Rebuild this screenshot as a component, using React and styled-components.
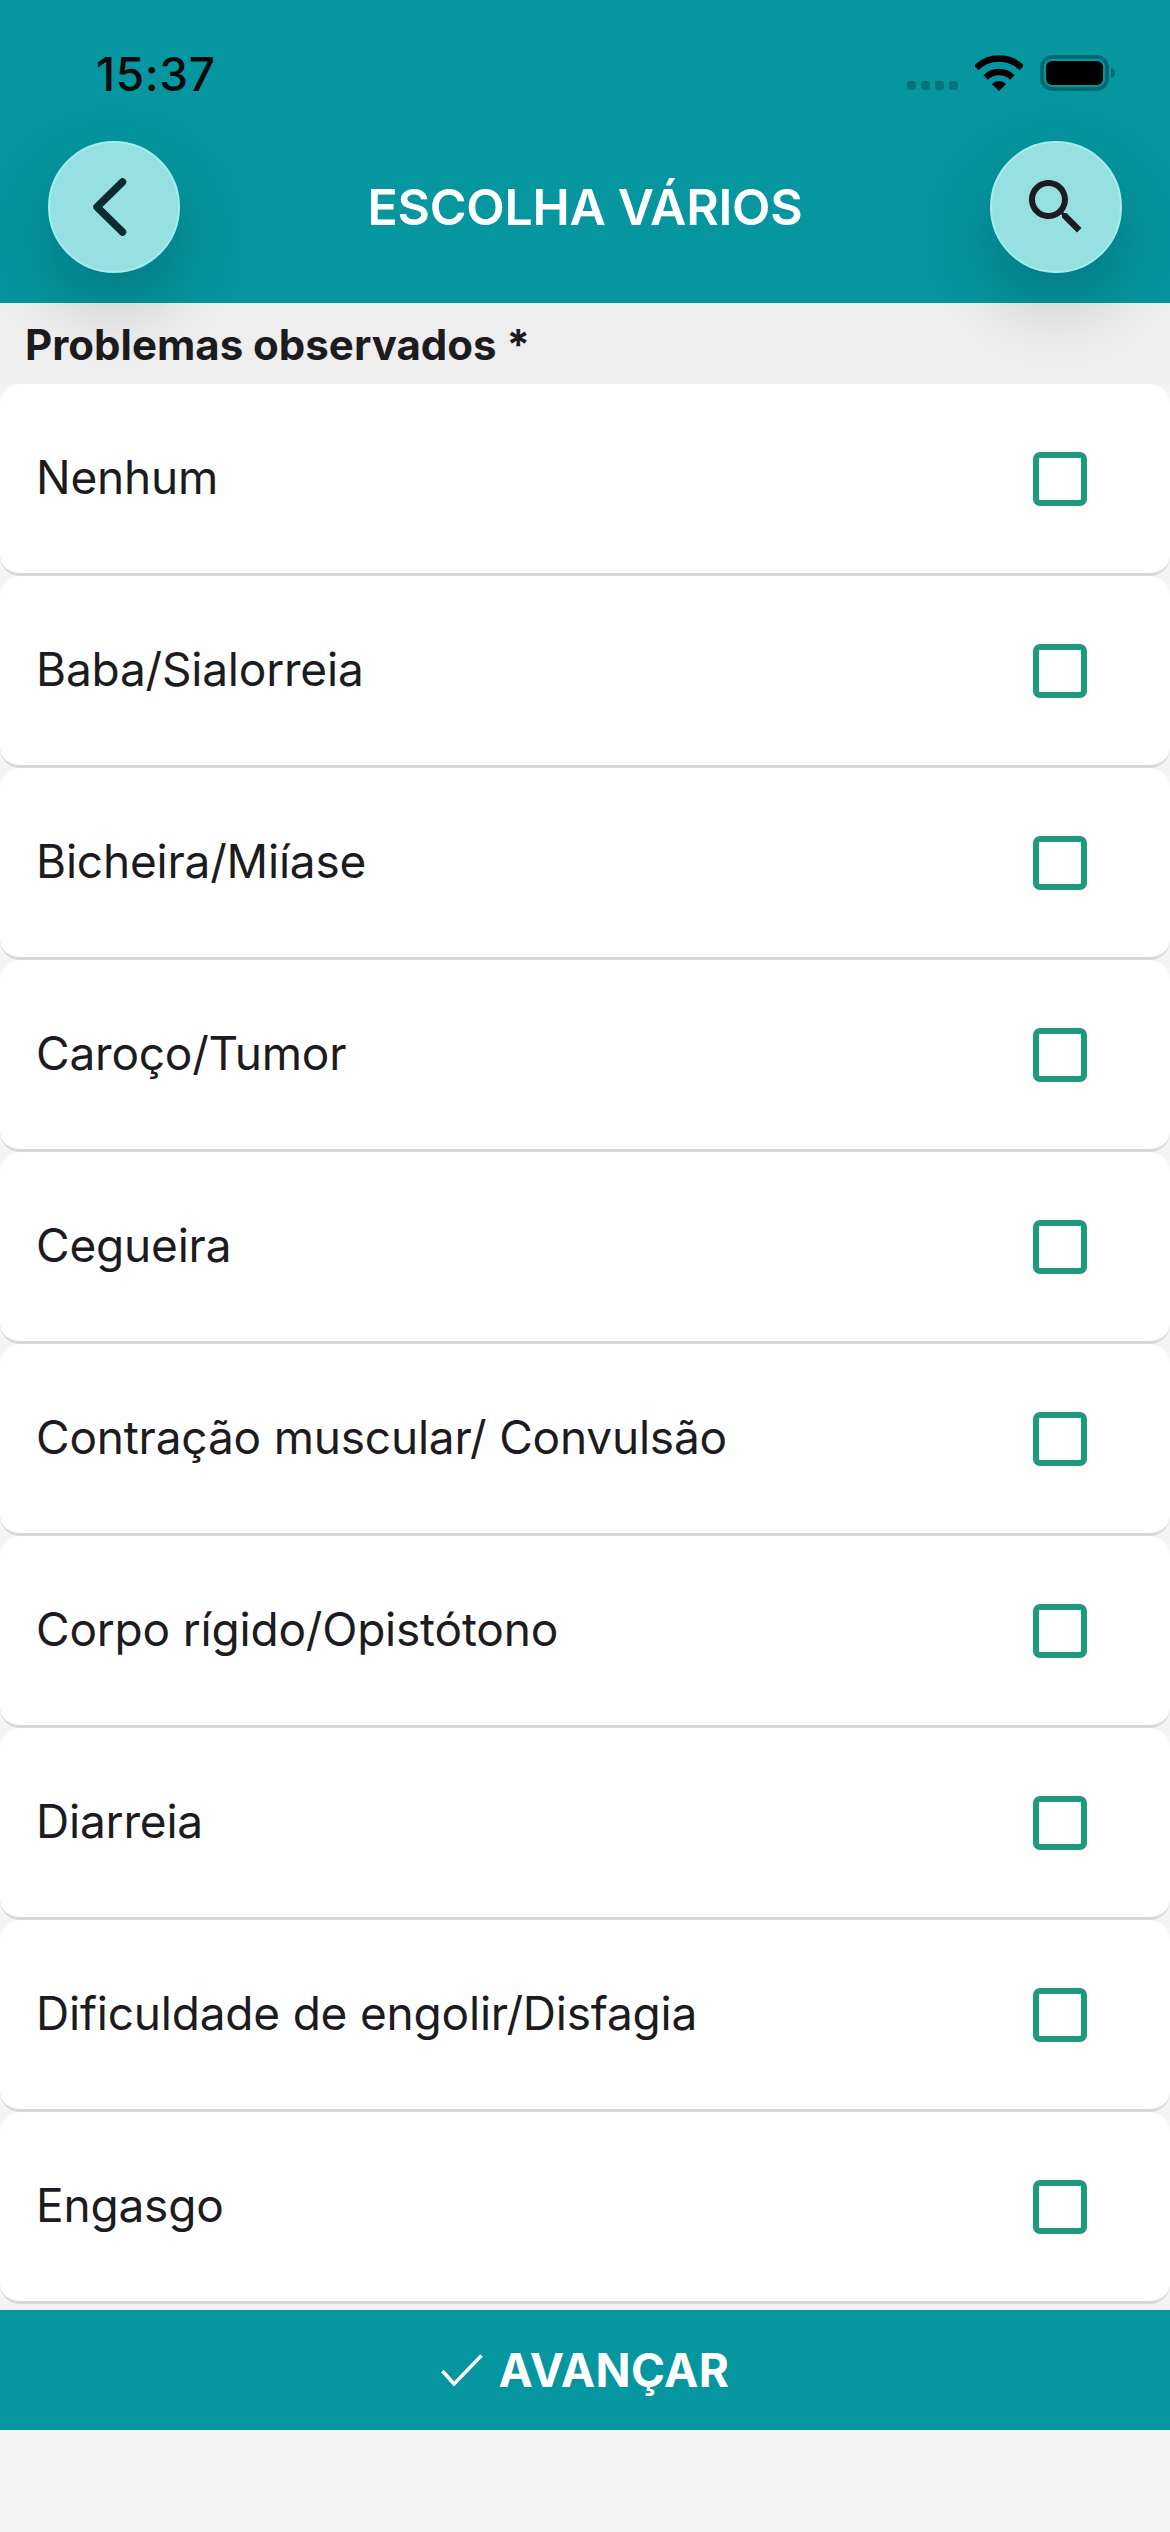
import styled, { createGlobalStyle } from "styled-components";

const GlobalStyle = createGlobalStyle`
  html, body {
    margin: 0;
    padding: 0;
    background-color: #f4f4f4;
  }
  * {
    box-sizing: border-box;
  }
`;

const Page = styled.div`
  width: 1170px;
  height: 2532px;
  overflow: hidden;
  display: flex;
  flex-direction: column;
  background-color: #f4f4f4;
  font-family: Inter, "Liberation Sans", sans-serif;
  color: #1c1c1e;
`;

const Header = styled.header`
  position: relative;
  z-index: 1;
  height: 303px;
  display: flex;
  flex-direction: column;
  background-color: #05969f;
`;

const StatusBar = styled.div`
  height: 141px;
  display: flex;
  align-items: flex-start;
  justify-content: space-between;
  padding: 49px 55px 0 96px;
`;

const Clock = styled.span`
  font-size: 46px;
  line-height: 50px;
  font-weight: 500;
  letter-spacing: 0.6px;
  color: #0a0a0a;
`;

const StatusIcons = styled.div`
  display: flex;
  align-items: flex-start;
  gap: 17px;
  padding-top: 6px;
`;

const NavRow = styled.div`
  display: flex;
  align-items: center;
  justify-content: space-between;
  padding: 0 48px;
`;

const RoundButton = styled.button`
  width: 132px;
  height: 132px;
  padding: 0;
  display: flex;
  align-items: center;
  justify-content: center;
  border: 2px solid #a4eeee;
  border-radius: 50%;
  background-color: #96e0e2;
  box-shadow: 0 30px 70px rgba(0, 0, 0, 0.2);
`;

const BackIcon = styled.svg`
  margin-right: 8px;
`;

const Title = styled.h1`
  margin: 0;
  font-size: 50px;
  line-height: 60px;
  font-weight: 600;
  letter-spacing: -0.3px;
  color: #ffffff;
`;

const SectionBar = styled.div`
  height: 81px;
  display: flex;
  align-items: center;
  padding: 2px 0 0 25px;
  background-color: #eeeeee;
`;

const SectionLabel = styled.h2`
  margin: 0;
  font-size: 42px;
  line-height: 48px;
  font-weight: 700;
`;

const OptionList = styled.ul`
  position: relative;
  z-index: 2;
  margin: 0;
  padding: 0;
  list-style: none;
`;

const Option = styled.li`
  height: 192px;
  display: flex;
  align-items: center;
  justify-content: space-between;
  padding: 0 83px 3px 36px;
  background-color: #fefefe;
  border-bottom: 3px solid #d8d8d8;
  border-radius: 20px;
`;

const OptionText = styled.span`
  font-size: 46px;
  line-height: 56px;
  letter-spacing: -0.2px;
`;

const CheckBox = styled.span`
  width: 54px;
  height: 54px;
  margin-top: 3px;
  border: 6px solid #1f9a7c;
  border-radius: 7px;
`;

const Footer = styled.button`
  height: 120px;
  margin-top: 6px;
  padding: 0;
  display: flex;
  align-items: center;
  justify-content: center;
  gap: 16px;
  border: none;
  background-color: #05969f;
  font-family: inherit;
  font-size: 46px;
  font-weight: 700;
  letter-spacing: 0.4px;
  color: #ffffff;
`;

const options = [
  "Nenhum",
  "Baba/Sialorreia",
  "Bicheira/Miíase",
  "Caroço/Tumor",
  "Cegueira",
  "Contração muscular/ Convulsão",
  "Corpo rígido/Opistótono",
  "Diarreia",
  "Dificuldade de engolir/Disfagia",
  "Engasgo",
];

const SignalDots = () => (
  <svg width="51" height="36" viewBox="0 0 51 36">
    {[0, 14, 28, 42].map((x) => (
      <rect key={x} x={x} y="26" width="9" height="9" rx="3" fill="#00747a" />
    ))}
  </svg>
);

const WifiIcon = () => (
  <svg width="48" height="36" viewBox="0 0 48 36" fill="none">
    <path d="M1.2 12.9A32.3 32.3 0 0 1 46.8 12.9" stroke="#000" strokeWidth="6.6" />
    <path d="M10.6 22.6A19 19 0 0 1 37.4 22.6" stroke="#000" strokeWidth="6.4" />
    <path d="M24 36L16.9 28.9A10 10 0 0 1 31.1 28.9Z" fill="#000" />
  </svg>
);

const BatteryIcon = () => (
  <svg width="75" height="36" viewBox="0 0 75 36" fill="none">
    <rect x="2" y="2" width="65" height="32" rx="10" stroke="#00666c" strokeWidth="3.5" />
    <rect x="6" y="6" width="57" height="24" rx="6" fill="#000" />
    <path d="M71 13c2.5.6 4 2.6 4 5s-1.5 4.4-4 5z" fill="#00666c" />
  </svg>
);

const App = () => {
  return (
    <Page>
      <GlobalStyle />
      <Header>
        <StatusBar>
          <Clock>15:37</Clock>
          <StatusIcons>
            <SignalDots />
            <WifiIcon />
            <BatteryIcon />
          </StatusIcons>
        </StatusBar>
        <NavRow>
          <RoundButton aria-label="Voltar">
            <BackIcon width="34" height="58" viewBox="0 0 34 58" fill="none">
              <polyline
                points="29.5,4 4,29 29.5,54"
                stroke="#0b2b2f"
                strokeWidth="7.5"
                strokeLinecap="round"
                strokeLinejoin="round"
              />
            </BackIcon>
          </RoundButton>
          <Title>ESCOLHA VÁRIOS</Title>
          <RoundButton aria-label="Buscar">
            <svg width="72" height="72" viewBox="0 0 24 24">
              <path
                fill="#1c1c1e"
                d="M15.5 14h-.79l-.28-.27C15.41 12.59 16 11.11 16 9.5 16 5.91 13.09 3 9.5 3S3 5.91 3 9.5 5.91 16 9.5 16c1.61 0 3.09-.59 4.23-1.57l.27.28v.79l5 4.99L20.49 19l-4.99-5zm-6 0C7.01 14 5 11.99 5 9.5S7.01 5 9.5 5 14 7.01 14 9.5 11.99 14 9.5 14z"
              />
            </svg>
          </RoundButton>
        </NavRow>
      </Header>
      <SectionBar>
        <SectionLabel>Problemas observados *</SectionLabel>
      </SectionBar>
      <OptionList>
        {options.map((name) => (
          <Option key={name}>
            <OptionText>{name}</OptionText>
            <CheckBox />
          </Option>
        ))}
      </OptionList>
      <Footer>
        <svg width="42" height="32" viewBox="0 0 42 32" fill="none">
          <polyline points="1.5,17 13,30 40.5,1.5" stroke="#fff" strokeWidth="3.5" />
        </svg>
        AVANÇAR
      </Footer>
    </Page>
  );
};

export default App;
